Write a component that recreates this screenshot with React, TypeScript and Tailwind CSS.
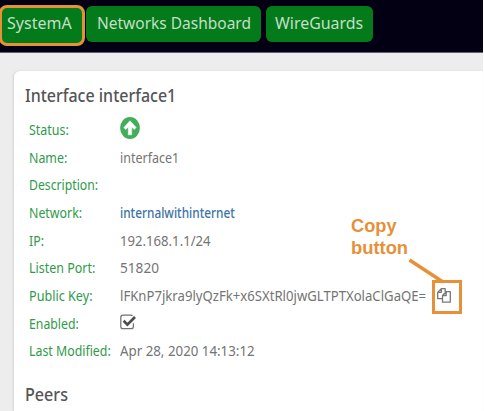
import { useLayoutEffect, useRef, useState } from "react";
import type { ReactNode } from "react";

/** A line of text whose glyphs are scaled horizontally to fill the given width. */
function Fit({ width, children }: { width: number; children: ReactNode }) {
  const ref = useRef<HTMLSpanElement>(null);
  const [scale, setScale] = useState(1);
  useLayoutEffect(() => {
    if (ref.current) setScale(width / ref.current.offsetWidth);
  }, [width]);
  return (
    <span className="block overflow-visible" style={{ width }}>
      <span
        ref={ref}
        className="inline-block origin-left whitespace-nowrap"
        style={{ transform: `scaleX(${scale})` }}
      >
        {children}
      </span>
    </span>
  );
}

function ArrowCircleUp() {
  return (
    <svg viewBox="0 0 20 22" preserveAspectRatio="none" className="-mt-0.5 h-[22px] w-5">
      <ellipse cx="10" cy="11" rx="9.9" ry="10.9" fill="#43ad5b" />
      <path
        d="M10 3.8 L16.2 10.5 L14.3 12.6 L11.7 9.9 V17.8 H8.3 V9.9 L5.7 12.6 L3.8 10.5 Z"
        fill="#fff"
        stroke="#fff"
        strokeWidth=".5"
        strokeLinejoin="round"
      />
    </svg>
  );
}

function CheckSquare() {
  return (
    <svg viewBox="0 0 17 16" className="-mt-0.5 h-4 w-[17px]" fill="none" stroke="#5c5c5c">
      <path d="M12.5 1.7 Q12 1.2 10.9 1.2 H3 Q.8 1.2 .8 3.4 V12.4 Q.8 14.7 3 14.7 H11 Q13.4 14.7 13.4 12.4 V9.3" stroke="#737373" strokeWidth="1.25" />
      <path d="M3.6 6.7 L7.4 10.6 L15 3" stroke="#4c4c4c" strokeWidth="2.7" />
    </svg>
  );
}

function CopyIcon() {
  return (
    <svg viewBox="0 0 14 15" className="h-[15px] w-3.5" fill="none" stroke="#777" strokeWidth="1.3" strokeLinejoin="round">
      <path d="M5.4 10.7 H.7 V4.4 L4.3 .7 H8.2 V4 M4.3 .7 V4.4 H.7" />
      <path d="M9.2 3.7 H13.3 V14.2 H5.5 V7.5 Z M9.2 3.7 V7.5 H5.5" />
    </svg>
  );
}

type Row = { label: string; lw: number; value?: string; vw?: number; kind?: "up" | "check" | "link" | "key" };

const rows: Row[] = [
  { label: "Status:", lw: 40, kind: "up" },
  { label: "Name:", lw: 38, value: "interface1", vw: 59 },
  { label: "Description:", lw: 69 },
  { label: "Network:", lw: 53, value: "internalwithinternet", vw: 115, kind: "link" },
  { label: "IP:", lw: 15, value: "192.168.1.1/24", vw: 91 },
  { label: "Listen Port:", lw: 66, value: "51820", vw: 39 },
  { label: "Public Key:", lw: 64, value: "lFKnP7jkra9lyQzFk+x6SXtRl0jwGLTPTXolaClGaQE=", vw: 306, kind: "key" },
  { label: "Enabled:", lw: 50, kind: "check" },
  { label: "Last Modified:", lw: 82, value: "Apr 28, 2020 14:13:12", vw: 135 },
];

function NavButton({ label, width, className }: { label: string; width: number; className: string }) {
  return (
    <button className={`flex items-center bg-[#047b1b] text-[17px] leading-6 text-[#c3dfc7] ${className}`}>
      <Fit width={width}>{label}</Fit>
    </button>
  );
}

export default function App() {
  return (
    <div className="relative h-[411px] w-[484px] overflow-hidden bg-white font-['Noto_Sans',sans-serif]">
      <div className="flex h-full w-[483px] flex-col bg-[#ededed]">
        <nav className="flex h-[53px] shrink-0 items-start border-b border-[#685f75] bg-[#030014]">
          <NavButton label="SystemA" width={65} className="-ml-px mt-[5px] h-[41px] w-[86px] shrink-0 rounded-lg border-[3px] border-[#e69138] pb-[5px] pl-[5px]" />
          <NavButton label="Networks Dashboard" width={154} className="mt-1.5 ml-px h-9 w-[175px] shrink-0 rounded-md pb-0.5 pl-[11px]" />
          <NavButton label="WireGuards" width={88} className="mt-1.5 ml-[5px] h-9 w-[107px] shrink-0 rounded-md pb-0.5 pl-[9px]" />
        </nav>
        <main className="mt-[18px] ml-3.5 flex-1 rounded-tl-md bg-white pt-2.5 pl-[11px] shadow-[-1px_0_2px_#d5d5d5]">
          <h1 className="text-[18px] leading-7 font-medium text-[#555]">
            <Fit width={151}>Interface interface1</Fit>
          </h1>
          <dl className="mt-[6.5px] ml-1 text-[14px]">
            {rows.map((row) => (
              <div key={row.label} className="flex h-[27.7px] items-center">
                <dt className="w-[91px] shrink-0 text-[#2f9a49]">
                  <Fit width={row.lw}>{row.label}</Fit>
                </dt>
                <dd className={row.kind === "link" ? "font-medium text-[#3b73a5]" : "text-[#747474]"}>
                  {row.kind === "up" && <ArrowCircleUp />}
                  {row.kind === "check" && <CheckSquare />}
                  {row.value && <Fit width={row.vw ?? 0}>{row.value}</Fit>}
                </dd>
                {row.kind === "key" && (
                  <button aria-label="Copy" className="mt-1 ml-[6px] flex h-[34px] w-[30px] shrink-0 items-center border-[3px] border-[#e69138] pb-1 pl-[2px]">
                    <CopyIcon />
                  </button>
                )}
              </div>
            ))}
          </dl>
          <h2 className="mt-[15px] text-[18px] leading-7 font-medium text-[#555]">
            <Fit width={43}>Peers</Fit>
          </h2>
        </main>
      </div>
      <div className="absolute top-[215px] left-[351px] font-['Liberation_Sans',sans-serif] text-[19px] leading-[22px] font-bold text-[#e69138]">
        <Fit width={46}>Copy</Fit>
        <Fit width={57}>button</Fit>
      </div>
      <svg className="absolute top-[256px] left-[405px] h-7 w-10" viewBox="0 0 40 28">
        <path d="M4.5 4 L38 26" stroke="#e69138" strokeWidth="3.5" />
      </svg>
    </div>
  );
}
